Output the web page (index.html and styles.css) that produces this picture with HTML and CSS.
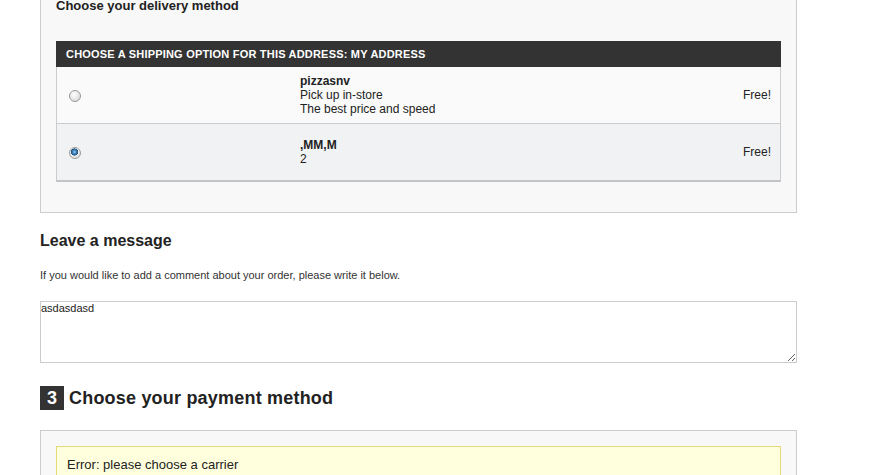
FILE: index.html
```html
<!DOCTYPE html>
<html lang="en">
<head>
  <meta charset="UTF-8" />
  <title>Order - Checkout</title>
  <link rel="stylesheet" href="styles.css">
</head>
<body>

<div class="page">

  <!-- Delivery method -->
  <div class="order-box delivery-box">
    <h3 class="box-title">Choose your delivery method</h3>

    <div class="carrier-list">
      <div class="carrier-head">Choose a shipping option for this address: My Address</div>

      <label class="carrier-row">
        <span class="carrier-radio"><input type="radio" name="carrier"></span>
        <span class="carrier-info">
          <strong>pizzasnv</strong>
          Pick up in-store<br>
          The best price and speed
        </span>
        <span class="carrier-price">Free!</span>
      </label>

      <label class="carrier-row alt">
        <span class="carrier-radio"><input type="radio" name="carrier" checked></span>
        <span class="carrier-info">
          <strong>,MM,M</strong>
          2
        </span>
        <span class="carrier-price">Free!</span>
      </label>
    </div>
  </div>

  <!-- Message -->
  <h3 class="message-title">Leave a message</h3>
  <p class="message-note">If you would like to add a comment about your order, please write it below.</p>
  <textarea class="message-input" spellcheck="false">asdasdasd</textarea>

  <!-- Payment -->
  <h2 class="step-title"><span class="step-num">3</span>Choose your payment method</h2>

  <div class="order-box payment-box">
    <div class="warning">Error: please choose a carrier</div>
  </div>

</div>

</body>
</html>
```

FILE: styles.css
```css
body {
  margin: 0;
  background: #fff;
  color: #333;
  font-family: 'Liberation Sans', Arial, sans-serif;
  font-size: 12px;
}

.page {
  width: 757px;
  padding: 0 40px;
}

.order-box {
  background: #f8f8f8;
  border: 1px solid #ccc;
  padding: 15px;
}

.delivery-box {
  margin-top: -20px;
  padding-top: 17px;
  padding-bottom: 30px;
}

.box-title {
  margin: 0 0 27px;
  font-size: 13px;
  line-height: 16px;
  color: #222;
}

/* Carrier table */
.carrier-list {
  border: 1px solid #ccc;
  border-top: none;
  border-bottom: 2px solid #c2c4c7;
}

.carrier-head {
  background: #333;
  color: #fff;
  font-weight: bold;
  font-size: 11px;
  letter-spacing: 0.2px;
  text-transform: uppercase;
  height: 26px;
  line-height: 26px;
  padding-left: 10px;
  margin: 0 -1px;
}

.carrier-row {
  display: grid;
  grid-template-columns: 243px 1fr auto;
  align-items: center;
  height: 56px;
  background: #fafafa;
  line-height: 14px;
}

.carrier-row + .carrier-row {
  border-top: 1px solid #ccc;
}

.carrier-row.alt {
  background: #f1f2f4;
}

.carrier-info {
  color: #222;
}

.carrier-info strong {
  display: block;
}

.carrier-price {
  padding-right: 9px;
  color: #222;
}

.carrier-radio input {
  appearance: none;
  -webkit-appearance: none;
  display: block;
  width: 12px;
  height: 12px;
  margin: 1px 0 0 12px;
  border: 1px solid #9a9a9a;
  border-radius: 50%;
  background: radial-gradient(circle at 40% 35%, #fff 0, #e4e4e4 60%, #cfcfcf 100%);
}

.carrier-radio input:checked {
  background:
    radial-gradient(circle at 45% 40%, #9cc8ea 0, #3a7db5 25%, #17507f 42%, transparent 46%),
    radial-gradient(circle at 40% 35%, #fff 0, #e8e8e8 60%, #cfcfcf 100%);
}

/* Message */
.message-title {
  margin: 18px 0 18px;
  font-size: 16px;
  line-height: 19px;
  color: #222;
}

.message-note {
  margin: 0 0 19px;
  font-size: 11px;
  line-height: 14px;
}

.message-input {
  display: block;
  box-sizing: border-box;
  width: 757px;
  height: 62px;
  margin: 0;
  padding: 0;
  border: 1px solid #ccc;
  font-family: 'Liberation Sans', Arial, sans-serif;
  font-size: 11px;
  color: #222;
  background: #fff;
}

/* Payment */
.step-title {
  display: flex;
  align-items: center;
  margin: 23px 0 20px;
  font-size: 18px;
  letter-spacing: 0.2px;
  line-height: 24px;
  color: #222;
}

.step-num {
  width: 24px;
  height: 24px;
  margin-right: 5px;
  background: #333;
  color: #fff;
  text-align: center;
  font-size: 18px;
}

.payment-box {
  padding-bottom: 20px;
}

.warning {
  background: #ffffdd;
  border: 1px solid #e4da7c;
  padding: 10px 10px;
  font-size: 13px;
  line-height: 15px;
  color: #222;
}
```
